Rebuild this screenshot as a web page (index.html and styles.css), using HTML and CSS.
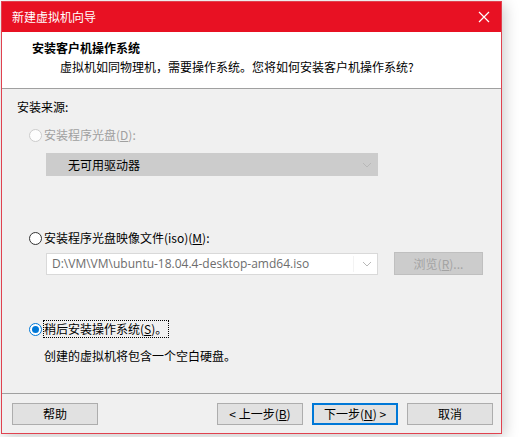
FILE: index.html
```html
<!DOCTYPE html>
<html lang="zh-CN">
<head>
<meta charset="utf-8">
<title>新建虚拟机向导</title>
<link rel="stylesheet" href="styles.css">
</head>
<body>
<div class="window">
  <div class="titlebar">
    <span class="title">新建虚拟机向导</span>
    <svg class="close" width="12" height="12" viewBox="0 0 12 12"><path d="M1 1L11 11M11 1L1 11" stroke="#ffffff" stroke-width="1.2" fill="none"/></svg>
  </div>
  <div class="header">
    <div class="h-title">安装客户机操作系统</div>
    <div class="h-sub">虚拟机如同物理机，需要操作系统。您将如何安装客户机操作系统?</div>
  </div>
  <div class="content">
    <div class="label">安装来源:</div>

    <div class="radio-row first disabled">
      <span class="radio"></span>
      <span class="rtext">安装程序光盘(<u>D</u>):</span>
    </div>
    <div class="combo combo-disabled">
      <span class="combo-text">无可用驱动器</span>
      <svg class="chev" width="10" height="6" viewBox="0 0 10 6"><path d="M1 1L5 5L9 1" stroke="#b8b8b8" stroke-width="1" fill="none"/></svg>
    </div>

    <div class="radio-row second">
      <span class="radio"></span>
      <span class="rtext">安装程序光盘映像文件(iso)(<u>M</u>):</span>
    </div>
    <div class="iso-row">
      <div class="combo combo-iso">
        <span class="iso-field">D:\VM\VM\ubuntu-18.04.4-desktop-amd64.iso</span>
        <svg class="chev" width="10" height="6" viewBox="0 0 10 6"><path d="M1 1L5 5L9 1" stroke="#b8b8b8" stroke-width="1" fill="none"/></svg>
      </div>
      <div class="browse">浏览(<u>R</u>)...</div>
    </div>

    <div class="radio-row third">
      <span class="radio checked"></span>
      <span class="rtext focus">稍后安装操作系统(<u>S</u>)。</span>
    </div>
    <div class="desc">创建的虚拟机将包含一个空白硬盘。</div>
  </div>
  <div class="footer">
    <div class="btn help">帮助</div>
    <div class="btn-group">
      <div class="btn">&lt; 上一步(<u>B</u>)</div>
      <div class="btn default">下一步(<u>N</u>) &gt;</div>
      <div class="btn">取消</div>
    </div>
  </div>
</div>
</body>
</html>
```

FILE: styles.css
```css
html, body {
  margin: 0;
  padding: 0;
  background: #ffffff;
}

body {
  width: 524px;
  height: 437px;
  overflow: hidden;
  font-family: "Noto Sans CJK SC", "Noto Sans", sans-serif;
  font-size: 12px;
  color: #000000;
}

.window {
  margin: 1px 0 0 1px;
  width: 499px;
  height: 431px;
  border: 1px solid #e0424f;
  background: #f0f0f0;
  display: flex;
  flex-direction: column;
  box-shadow: 2px 3px 14px rgba(0, 0, 0, 0.22);
}

.titlebar {
  height: 30px;
  background: #e81123;
  display: flex;
  align-items: center;
  justify-content: space-between;
  padding: 0 11px 0 10px;
  flex: none;
}

.title {
  color: #ffffff;
  line-height: 16px;
  margin-top: -1px;
}

.close {
  display: block;
  margin-top: -1px;
}

.header {
  background: #ffffff;
  border-bottom: 1px solid #a0a0a0;
  padding: 8px 0 0 30px;
  box-sizing: border-box;
  height: 57px;
  flex: none;
}

.h-title {
  font-weight: bold;
  line-height: 16px;
}

.h-sub {
  line-height: 16px;
  margin-top: 3px;
  padding-left: 28px;
}

.content {
  flex: 1;
  padding: 10px 0 0 15px;
}

.label {
  line-height: 16px;
}

.radio-row {
  display: flex;
  align-items: center;
  height: 16px;
  padding-left: 12px;
}

.radio-row.first { margin-top: 12px; }
.radio-row.second { margin-top: 54px; }
.radio-row.third { margin-top: 46px; }

.radio {
  width: 11px;
  height: 11px;
  border: 1px solid #333333;
  border-radius: 50%;
  background: #ffffff;
  flex: none;
  position: relative;
}

.disabled .radio {
  border-color: #cccccc;
  background: #fdfdfd;
}

.radio.checked {
  border-color: #0078d7;
}

.radio.checked::after {
  content: "";
  position: absolute;
  left: 2px;
  top: 2px;
  width: 7px;
  height: 7px;
  border-radius: 50%;
  background: #0078d7;
}

.rtext {
  margin-left: 2px;
  line-height: 16px;
}

.disabled .rtext {
  color: #a0a0a0;
}

.focus {
  outline: 1px dotted #000000;
  outline-offset: 0;
  padding-right: 1px;
}

.combo {
  margin-left: 29px;
  width: 332px;
  height: 23px;
  box-sizing: border-box;
  display: flex;
  align-items: center;
  justify-content: space-between;
  padding-right: 5px;
}

.combo-disabled {
  margin-top: 10px;
  background: #cccccc;
  border: 1px solid #cccccc;
  padding-left: 21px;
}

.combo-text {
  line-height: 16px;
}

.iso-row {
  display: flex;
  align-items: flex-start;
  margin-top: 6px;
}

.combo-iso {
  margin-top: 1px;
  height: 22px;
  background: #ffffff;
  border: 1px solid #d9d9d9;
  padding-left: 5px;
}

.iso-field {
  color: #6d6d6d;
  font-family: "Open Sans", "Noto Sans", sans-serif;
  font-size: 12px;
  line-height: 16px;
  flex: 1;
  border-right: 1px solid #f3f3f3;
  margin-right: 8px;
}

.browse {
  margin-left: 16px;
  width: 89px;
  height: 23px;
  box-sizing: border-box;
  background: #cccccc;
  border: 1px solid #bfbfbf;
  color: #a3a3a3;
  display: flex;
  align-items: center;
  justify-content: center;
  line-height: 16px;
}

.chev {
  display: block;
  flex: none;
}

.desc {
  margin-top: 11px;
  padding-left: 27px;
  line-height: 16px;
}

.footer {
  flex: none;
  height: 40px;
  box-sizing: border-box;
  border-top: 1px solid #a0a0a0;
  padding: 9px 8px 0 10px;
  display: flex;
  justify-content: space-between;
  align-items: flex-start;
}

.btn-group {
  display: flex;
  gap: 9px;
}

.btn {
  width: 86px;
  height: 22px;
  box-sizing: border-box;
  background: #e1e1e1;
  border: 1px solid #adadad;
  display: flex;
  align-items: center;
  justify-content: center;
  line-height: 16px;
}

.btn.default {
  border: 2px solid #0078d7;
}

u {
  text-decoration: underline;
  text-underline-offset: 1px;
}
```
